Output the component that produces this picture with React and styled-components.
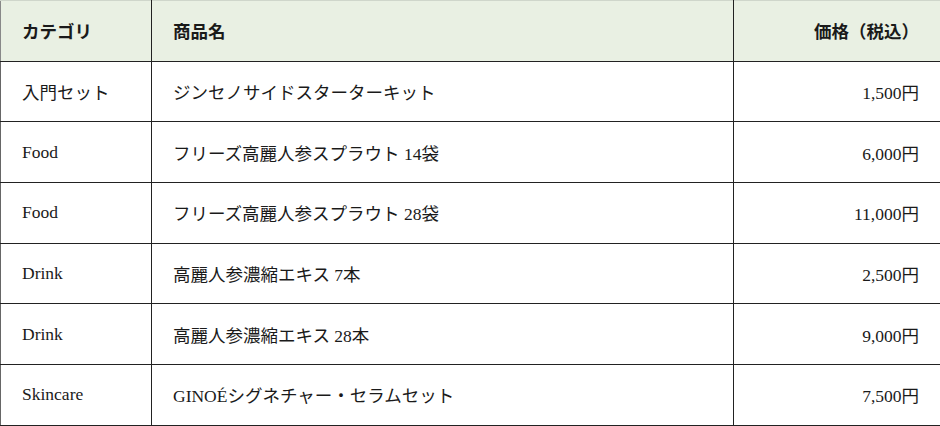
import React from "react";
import styled, { createGlobalStyle } from "styled-components";

const Global = createGlobalStyle`
  html, body { margin: 0; padding: 0; background: #fff; }
  body { font-family: "Liberation Serif", "Noto Sans CJK JP", serif; }
`;

const Table = styled.table`
  width: 940px;
  border-collapse: collapse;
  table-layout: fixed;
  font-family: "Liberation Serif", "Noto Sans CJK JP", serif;
  font-size: 17.5px;
  color: #1a1a1a;
`;

const Row = styled.tr`
  height: 60.67px;
`;

const HeadCell = styled.th`
  background: #e9f0e3;
  font-family: "Noto Sans CJK JP", sans-serif;
  font-weight: 700;
  font-size: 17.5px;
  text-align: ${(p) => (p.$right ? "right" : "left")};
  padding: 0 21px;
  border: 1px solid #222;
  border-top-color: #cfd6cb;
  border-left-color: #888;
  border-right-color: ${(p) => (p.$last ? "#888" : "#222")};
`;

const Cell = styled.td`
  text-align: ${(p) => (p.$right ? "right" : "left")};
  padding: 0 21px;
  border: 1px solid #222;
  border-left-color: ${(p) => (p.$first ? "#666" : "#222")};
  border-right-color: ${(p) => (p.$last ? "#888" : "#222")};
  white-space: nowrap;
`;

const rows = [
  ["入門セット", "ジンセノサイドスターターキット", "1,500円"],
  ["Food", "フリーズ高麗人参スプラウト 14袋", "6,000円"],
  ["Food", "フリーズ高麗人参スプラウト 28袋", "11,000円"],
  ["Drink", "高麗人参濃縮エキス 7本", "2,500円"],
  ["Drink", "高麗人参濃縮エキス 28本", "9,000円"],
  ["Skincare", "GINOÉシグネチャー・セラムセット", "7,500円"],
];

export default function App() {
  return (
    <>
      <Global />
      <Table>
        <colgroup>
          <col style={{ width: 151 }} />
          <col style={{ width: 582 }} />
          <col style={{ width: 207 }} />
        </colgroup>
        <thead>
          <Row>
            <HeadCell>カテゴリ</HeadCell>
            <HeadCell>商品名</HeadCell>
            <HeadCell $right $last>価格（税込）</HeadCell>
          </Row>
        </thead>
        <tbody>
          {rows.map((r, i) => (
            <Row key={i}>
              <Cell $first>{r[0]}</Cell>
              <Cell>{r[1]}</Cell>
              <Cell $right $last>{r[2]}</Cell>
            </Row>
          ))}
        </tbody>
      </Table>
    </>
  );
}
